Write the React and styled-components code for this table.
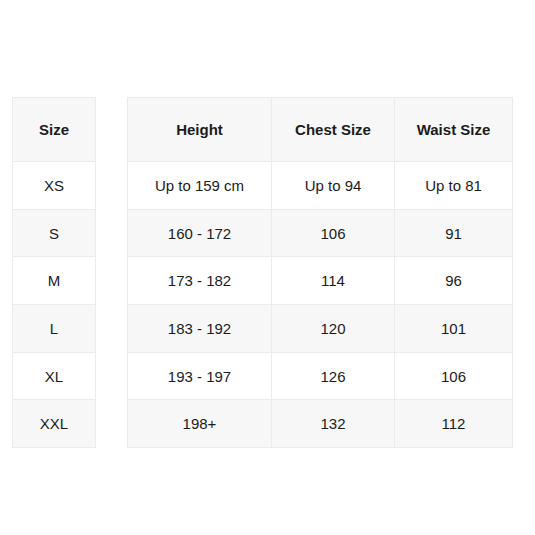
import React from 'react';
import styled, { createGlobalStyle } from 'styled-components';

const GlobalStyle = createGlobalStyle`
  body {
    margin: 0;
    background: #ffffff;
    font-family: "Liberation Sans", Arial, sans-serif;
    color: #1c1c1c;
  }
`;

const Page = styled.div`
  display: flex;
  align-items: flex-start;
  gap: 31px;
  padding: 97px 0 0 12px;
`;

const Table = styled.table`
  border-collapse: collapse;
  table-layout: fixed;
  width: ${p => p.width}px;
  font-size: 15px;
`;

const HeadCell = styled.th`
  height: 63px;
  padding: 0;
  background: #f7f7f7;
  border: 1px solid #ebebeb;
  font-weight: bold;
  text-align: center;
  width: ${p => (p.w ? `${p.w}px` : 'auto')};
`;

const Row = styled.tr`
  background: ${p => (p.striped ? '#f7f7f7' : '#ffffff')};
`;

const Cell = styled.td`
  height: 46.7px;
  padding: 0;
  border: 1px solid #ebebeb;
  text-align: center;
`;

const sizes = ['XS', 'S', 'M', 'L', 'XL', 'XXL'];

const measures = [
  ['Up to 159 cm', 'Up to 94', 'Up to 81'],
  ['160 - 172', '106', '91'],
  ['173 - 182', '114', '96'],
  ['183 - 192', '120', '101'],
  ['193 - 197', '126', '106'],
  ['198+', '132', '112'],
];

export default function App() {
  return (
    <>
      <GlobalStyle />
      <Page>
        <Table width={84}>
          <thead>
            <tr><HeadCell>Size</HeadCell></tr>
          </thead>
          <tbody>
            {sizes.map((s, i) => (
              <Row key={s} striped={i % 2 === 1}>
                <Cell>{s}</Cell>
              </Row>
            ))}
          </tbody>
        </Table>
        <Table width={386}>
          <thead>
            <tr>
              <HeadCell w={143}>Height</HeadCell>
              <HeadCell w={122}>Chest Size</HeadCell>
              <HeadCell>Waist Size</HeadCell>
            </tr>
          </thead>
          <tbody>
            {measures.map((m, i) => (
              <Row key={i} striped={i % 2 === 1}>
                {m.map((v, j) => <Cell key={j}>{v}</Cell>)}
              </Row>
            ))}
          </tbody>
        </Table>
      </Page>
    </>
  );
}
